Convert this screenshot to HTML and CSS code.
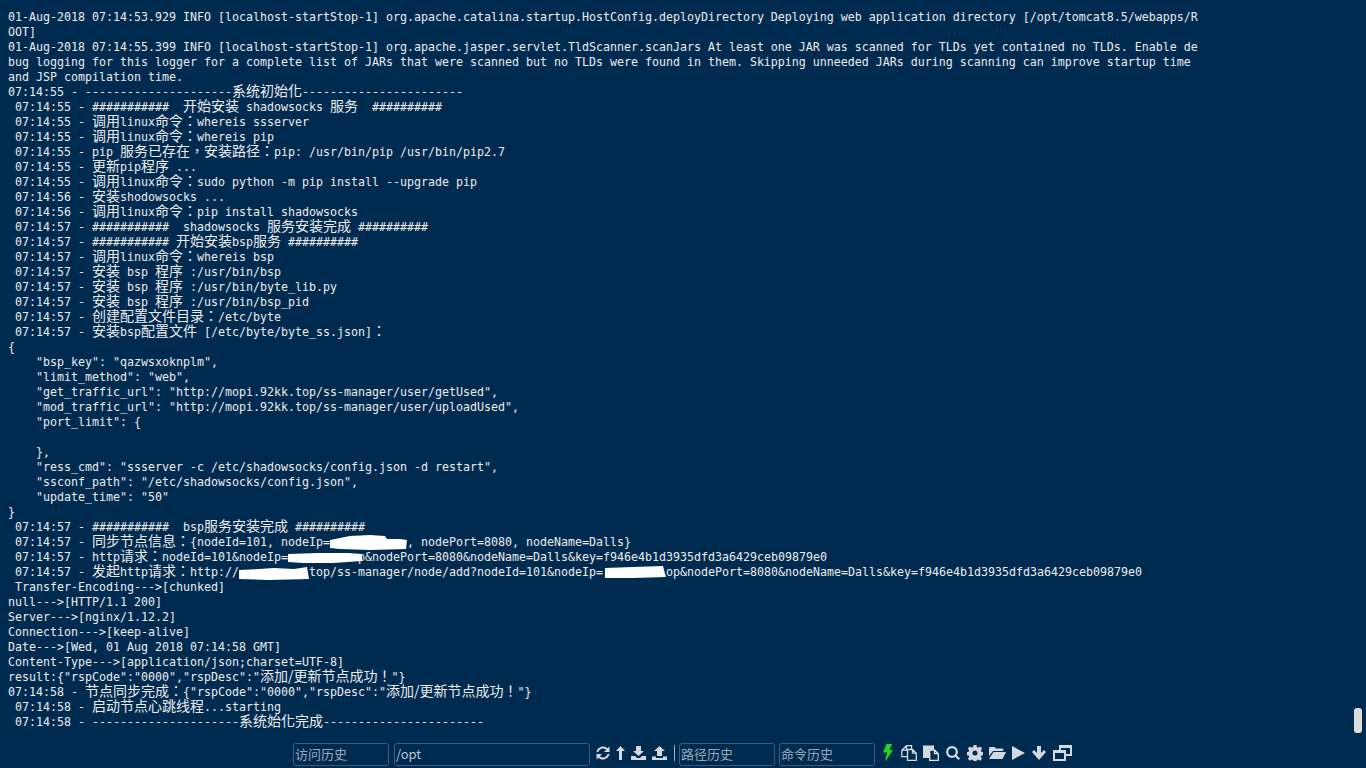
FILE: index.html
```html
<!DOCTYPE html>
<html lang="zh-Hant">
<head>
<meta charset="utf-8">
<title>Terminal</title>
<link rel="stylesheet" href="styles.css">
</head>
<body>
<main class="term">
<div class="l">01-Aug-2018 07:14:53.929 INFO [localhost-startStop-1] org.apache.catalina.startup.HostConfig.deployDirectory Deploying web application directory [/opt/tomcat8.5/webapps/R</div>
<div class="l">OOT]</div>
<div class="l">01-Aug-2018 07:14:55.399 INFO [localhost-startStop-1] org.apache.jasper.servlet.TldScanner.scanJars At least one JAR was scanned for TLDs yet contained no TLDs. Enable de</div>
<div class="l">bug logging for this logger for a complete list of JARs that were scanned but no TLDs were found in them. Skipping unneeded JARs during scanning can improve startup time</div>
<div class="l">and JSP compilation time.</div>
<div class="l">07:14:55 - ---------------------<span class="c">系统初始化</span>-----------------------</div>
<div class="l"> 07:14:55 - ###########  <span class="c">开始安装</span> shadowsocks <span class="c">服务</span>  ##########</div>
<div class="l"> 07:14:55 - <span class="c">调用</span>linux<span class="c">命令：</span>whereis ssserver</div>
<div class="l"> 07:14:55 - <span class="c">调用</span>linux<span class="c">命令：</span>whereis pip</div>
<div class="l"> 07:14:55 - pip <span class="c">服务已存在，安装路径：</span>pip: /usr/bin/pip /usr/bin/pip2.7</div>
<div class="l"> 07:14:55 - <span class="c">更新</span>pip<span class="c">程序</span> ...</div>
<div class="l"> 07:14:55 - <span class="c">调用</span>linux<span class="c">命令：</span>sudo python -m pip install --upgrade pip</div>
<div class="l"> 07:14:56 - <span class="c">安装</span>shodowsocks ...</div>
<div class="l"> 07:14:56 - <span class="c">调用</span>linux<span class="c">命令：</span>pip install shadowsocks</div>
<div class="l"> 07:14:57 - ###########  shadowsocks <span class="c">服务安装完成</span> ##########</div>
<div class="l"> 07:14:57 - ########### <span class="c">开始安装</span>bsp<span class="c">服务</span> ##########</div>
<div class="l"> 07:14:57 - <span class="c">调用</span>linux<span class="c">命令：</span>whereis bsp</div>
<div class="l"> 07:14:57 - <span class="c">安装</span> bsp <span class="c">程序</span> :/usr/bin/bsp</div>
<div class="l"> 07:14:57 - <span class="c">安装</span> bsp <span class="c">程序</span> :/usr/bin/byte_lib.py</div>
<div class="l"> 07:14:57 - <span class="c">安装</span> bsp <span class="c">程序</span> :/usr/bin/bsp_pid</div>
<div class="l"> 07:14:57 - <span class="c">创建配置文件目录：</span>/etc/byte</div>
<div class="l"> 07:14:57 - <span class="c">安装</span>bsp<span class="c">配置文件</span> [/etc/byte/byte_ss.json]<span class="c">：</span></div>
<div class="l">{</div>
<div class="l">    "bsp_key": "qazwsxoknplm",</div>
<div class="l">    "limit_method": "web",</div>
<div class="l">    "get_traffic_url": "http://mopi.92kk.top/ss-manager/user/getUsed",</div>
<div class="l">    "mod_traffic_url": "http://mopi.92kk.top/ss-manager/user/uploadUsed",</div>
<div class="l">    "port_limit": {</div>
<div class="l"> </div>
<div class="l">    },</div>
<div class="l">    "ress_cmd": "ssserver -c /etc/shadowsocks/config.json -d restart",</div>
<div class="l">    "ssconf_path": "/etc/shadowsocks/config.json",</div>
<div class="l">    "update_time": "50"</div>
<div class="l">}</div>
<div class="l"> 07:14:57 - ###########  bsp<span class="c">服务安装完成</span> ##########</div>
<div class="l"> 07:14:57 - <span class="c">同步节点信息：</span>{nodeId=101, nodeIp=<span class="blob b1"></span>, nodePort=8080, nodeName=Dalls}</div>
<div class="l"> 07:14:57 - http<span class="c">请求：</span>nodeId=101&amp;nodeIp=<span class="blob b2"></span>p&amp;nodePort=8080&amp;nodeName=Dalls&amp;key=f946e4b1d3935dfd3a6429ceb09879e0</div>
<div class="l"> 07:14:57 - <span class="c">发起</span>http<span class="c">请求：</span>http://<span class="blob b3"></span>top/ss-manager/node/add?nodeId=101&amp;nodeIp=<span class="blob b4"></span>op&amp;nodePort=8080&amp;nodeName=Dalls&amp;key=f946e4b1d3935dfd3a6429ceb09879e0</div>
<div class="l"> Transfer-Encoding---&gt;[chunked]</div>
<div class="l">null---&gt;[HTTP/1.1 200]</div>
<div class="l">Server---&gt;[nginx/1.12.2]</div>
<div class="l">Connection---&gt;[keep-alive]</div>
<div class="l">Date---&gt;[Wed, 01 Aug 2018 07:14:58 GMT]</div>
<div class="l">Content-Type---&gt;[application/json;charset=UTF-8]</div>
<div class="l">result:{"rspCode":"0000","rspDesc":"<span class="c">添加/更新节点成功！</span>"}</div>
<div class="l">07:14:58 - <span class="c">节点同步完成：</span>{"rspCode":"0000","rspDesc":"<span class="c">添加/更新节点成功！</span>"}</div>
<div class="l"> 07:14:58 - <span class="c">启动节点心跳线程</span>...starting</div>
<div class="l"> 07:14:58 - ---------------------<span class="c">系统始化完成</span>-----------------------</div>
</main>
<div class="thumb"></div>
<footer class="bar">
  <input class="field w96" placeholder="访问历史">
  <input class="field w196" value="/opt">
  <div class="icons">
    <svg class="ic" width="14" height="14" viewBox="0 0 14 14"><path d="M13.500.5V6H8l2.200-2.200C9.300 3 8.200 2.600 7 2.600 4.800 2.600 3 4 2.400 6H.5C1.200 2.800 3.800.5 7 .5c1.800 0 3.500.7 4.700 1.800zM.5 13.500V8H6l-2.200 2.200c.9.8 2 1.200 3.200 1.200 2.200 0 4-1.400 4.600-3.400h1.900c-.7 3.200-3.300 5.500-6.500 5.500-1.800 0-3.500-.7-4.700-1.800z"/></svg>
    <svg class="ic" width="9" height="14" viewBox="0 0 9 14"><path d="M4.500 0 9 5H6v9H3V5H0z"/></svg>
    <svg class="ic" width="15" height="14" viewBox="0 0 15 14"><path d="M5 0h5v5h3l-5.500 5L2 5h3zM0 10h4l2 2h3l2-2h4v4H0z"/></svg>
    <svg class="ic" width="15" height="14" viewBox="0 0 15 14"><path d="M7.500 0 13 5h-3v5H5V5H2zM0 10.500h4V12h7v-1.500h4V14H0z"/></svg>
  </div>
  <span class="sep"></span>
  <input class="field w96" placeholder="路径历史">
  <input class="field w96 last" placeholder="命令历史">
  <div class="icons tail">
    <svg class="ic bolt" width="12" height="18" viewBox="0 0 12 18"><path d="M3.500 0H9L6.500 6H10L2 18l2-9.500H0z"/></svg>
    <svg class="ic line" width="16" height="16" viewBox="0 0 16 16"><path d="M6.500 4.500h5l3.800 3.700v7.100H6.500zM11.500 4.500v3.700h3.800M10.500 4.500V.7h-5L.8 5.200v6.500h5.700M5.500.7v4.500H.8"/></svg>
    <svg class="ic" width="17" height="16" viewBox="0 0 17 16"><path d="M0 .5h11v4H6V13H0z"/><path class="stroke" d="M6.700 5h4.800l3.800 3.700v6.600H6.700zM11.500 5v3.700h3.800"/></svg>
    <svg class="ic line thick" width="15" height="14" viewBox="0 0 15 14"><circle cx="6" cy="6" r="4.800"/><path d="M9.500 9.500 13.200 13.200"/></svg>
    <svg class="ic" width="16" height="16" viewBox="0 0 16 16"><path fill-rule="evenodd" d="M6.500 0h3l.4 2.300 1.300.5 1.900-1.300 2 2-1.300 1.900.5 1.300 2 .4v3l-2 .4-.5 1.300 1.300 1.900-2 2-1.900-1.300-1.300.5-.4 2h-3l-.4-2-1.300-.5-1.900 1.300-2-2 1.300-1.900-.5-1.300-2-.4v-3l2-.4.5-1.300L.9 3.500l2-2 1.900 1.300 1.300-.5zM8 5.500a2.500 2.500 0 1 0 0 5 2.500 2.500 0 0 0 0-5z"/></svg>
    <svg class="ic" width="17" height="14" viewBox="0 0 17 14"><path d="M0 2.500C0 1.500.6 1 1.500 1h4L7 2.500h6c.8 0 1.300.5 1.300 1.300V5H4L0 10zM4.500 6H17l-3.500 7H0z"/></svg>
    <svg class="ic" width="14" height="14" viewBox="0 0 14 14"><path d="M0 0l13 7-13 7z"/></svg>
    <svg class="ic" width="15" height="14" viewBox="0 0 15 14"><path d="M5 0h4v7l3-3 2 2-7 8-7-8 2-2 3 3z"/></svg>
    <svg class="ic" width="19" height="16" viewBox="0 0 19 16"><path fill-rule="evenodd" d="M6 0h13v11h-6v5H0V5h6zM8 3v2h5v4h4V3zM2 8v6h9V8z"/></svg>
  </div>
</footer>
</body>
</html>
```
FILE: styles.css
```css
html, body {
  margin: 0;
  height: 100%;
  background: #002b51;
  overflow: hidden;
}
body {
  display: flex;
  flex-direction: column;
  height: 768px;
  color: #ececec;
  font-family: "DejaVu Sans Mono", monospace;
  font-size: 11.63px;
}
.term {
  flex: 1;
  padding: 10px 0 0 8px;
}
.l {
  height: 15px;
  line-height: 15px;
  white-space: pre;
}
.c {
  font-family: "Noto Sans CJK TC", sans-serif;
  font-size: 14px;
  line-height: 0;
}
.blob {
  display: inline-block;
  position: relative;
  height: 15px;
  vertical-align: top;
  background: #fff;
}
.b1 {
  width: 77px;
  clip-path: polygon(0 5px, 10px 3px, 20px 1px, 40px 0, 55px 1px, 57px 4px, 70px 4px, 77px 5px, 76px 14px, 40px 15px, 10px 14px, 0 13px);
}
.b2 {
  width: 74px;
  margin-right: -4px;
  clip-path: polygon(0 4px, 30px 3px, 60px 3px, 74px 4px, 74px 11px, 45px 13px, 15px 13px, 0 12px);
}
.b3 {
  width: 70px;
  clip-path: polygon(0 5px, 20px 4px, 35px 3px, 55px 4px, 68px 2px, 70px 14px, 30px 15px, 0 14px);
}
.b4 {
  width: 63px;
  clip-path: polygon(2px 3px, 30px 2px, 60px 1px, 63px 12px, 30px 13px, 2px 13px);
}
.thumb {
  position: absolute;
  left: 1354px;
  top: 708px;
  width: 8px;
  height: 25px;
  border-radius: 3px;
  background: #ddd;
}
.bar {
  display: flex;
  align-items: center;
  flex: none;
  height: 27px;
  padding-left: 293px;
}
.field {
  box-sizing: border-box;
  height: 23px;
  margin-right: 5px;
  padding: 0 1px 2px;
  border: 1px solid #3f5c7c;
  border-radius: 3px;
  background: transparent;
  color: #b9c4cf;
  font-family: "Noto Sans CJK TC", "Liberation Sans", sans-serif;
  font-size: 13px;
  outline: none;
}
.field::placeholder { color: #9aa7b4; opacity: 1; }
.w96 { width: 96px; }
.w196 { width: 196px; }
.last { margin-right: 0; margin-left: -1px; }
.icons {
  display: flex;
  align-items: center;
  gap: 6px;
  margin: 0 0 3px 1px;
}
.tail { margin-left: 8px; }
.ic { fill: #d3d9df; flex: none; }
.bolt { fill: #27d327; }
.line { fill: none; stroke: #d3d9df; stroke-width: 1.3; }
.thick { stroke-width: 2.3; }
.stroke { fill: #002b51; stroke: #e4e9ee; stroke-width: 1.3; }
.sep {
  width: 1px;
  height: 16px;
  margin: 0 4px 3px 7px;
  background: #9fb0c0;
}
```
